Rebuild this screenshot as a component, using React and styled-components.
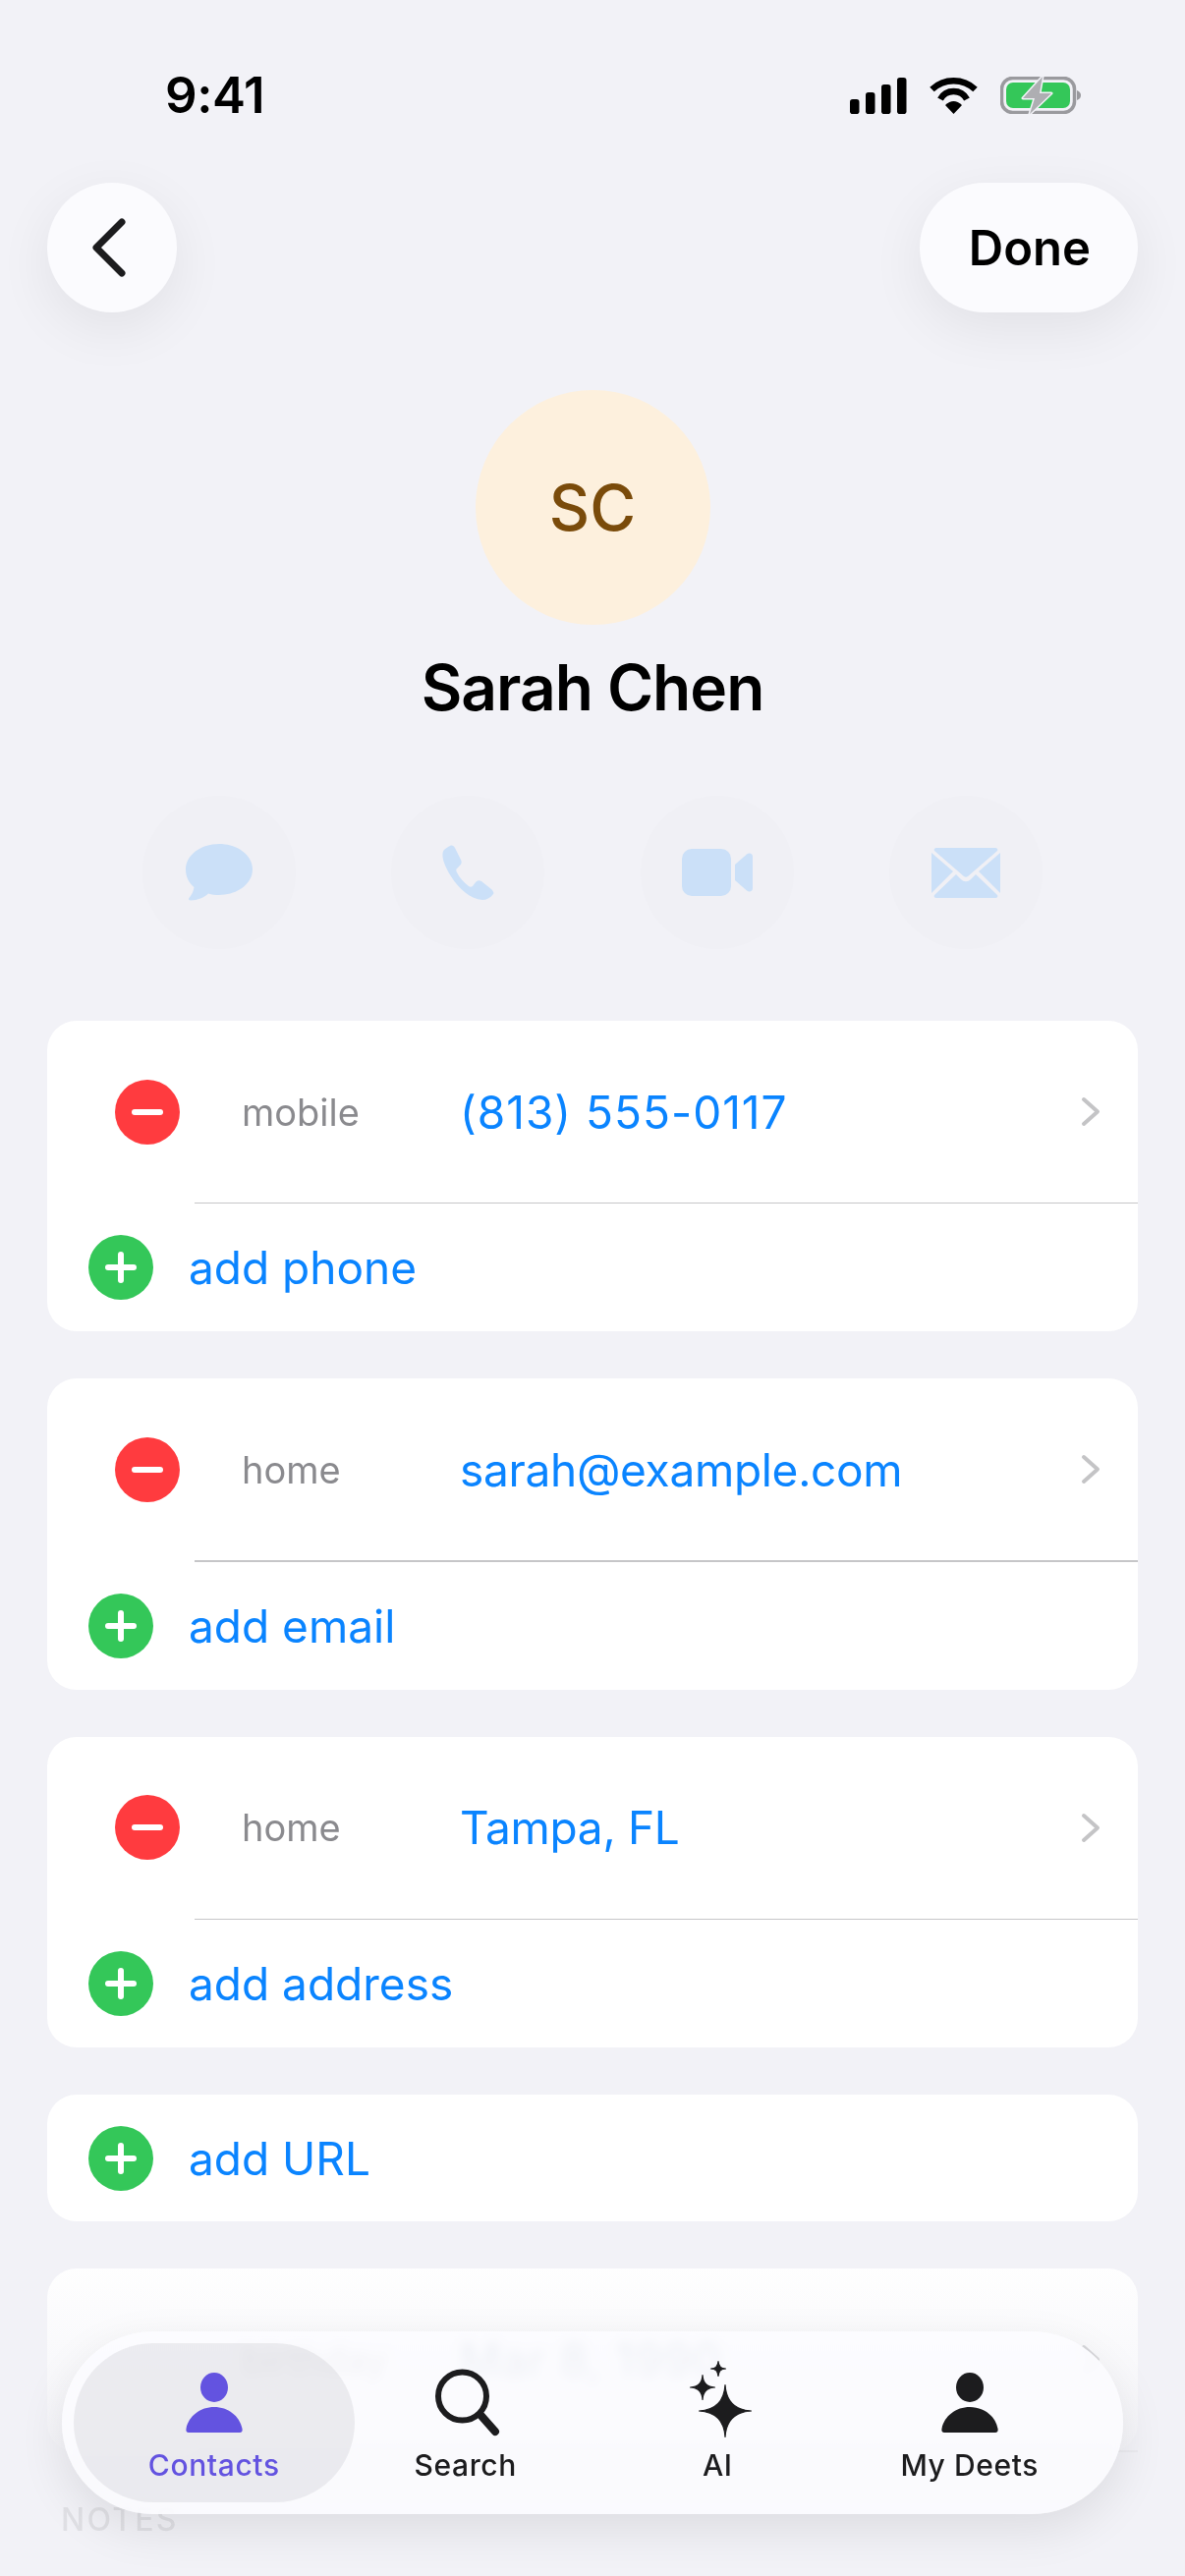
import React from 'react';
import styled, { createGlobalStyle } from 'styled-components';

const GlobalStyle = createGlobalStyle`
    html, body {
        margin: 0;
        padding: 0;
        background: #f2f2f7;
        font-family: Inter, 'Liberation Sans', sans-serif;
    }
`;

const Screen = styled.div`
    position: relative;
    width: 1206px;
    height: 2622px;
    overflow: hidden;
    background: #f2f2f7;
`;

const StatusBar = styled.div`
    display: flex;
    justify-content: space-between;
    align-items: center;
    height: 38px;
    padding: 78px 106px 70px 168px;
`;

const Clock = styled.span`
    font-size: 51px;
    line-height: 38px;
    font-weight: 600;
    color: #000;
    letter-spacing: -0.4px;
`;

const StatusIcons = styled.div`
    display: flex;
    align-items: center;
    gap: 22px;
    svg { display: block; }
`;

const TopBar = styled.div`
    display: flex;
    justify-content: space-between;
    padding: 0 48px;
`;

const RoundButton = styled.button`
    display: flex;
    align-items: center;
    justify-content: center;
    height: 132px;
    min-width: 132px;
    padding: ${p => (p.$wide ? '0 48px 0 50px' : '0')};
    border: none;
    border-radius: 66px;
    background: #fbfbfe;
    box-shadow: 0 16px 56px rgba(0, 0, 0, 0.07);
    font: 600 49px Inter, sans-serif;
    color: #000;
`;

const Profile = styled.section`
    display: flex;
    flex-direction: column;
    align-items: center;
    margin-top: 79px;
`;

const Avatar = styled.div`
    display: flex;
    align-items: center;
    justify-content: center;
    width: 239px;
    height: 239px;
    border-radius: 50%;
    background: #fdf0dd;
    color: #7a4b0a;
    font-size: 64px;
    font-weight: 500;
`;

const Name = styled.h1`
    margin: 24px 0 0;
    font-size: 64px;
    line-height: 80px;
    font-weight: 600;
    letter-spacing: -1px;
    color: #000;
`;

const Actions = styled.div`
    display: flex;
    justify-content: center;
    gap: 97.5px;
    margin-top: 70px;
`;

const ActionCircle = styled.div`
    display: flex;
    align-items: center;
    justify-content: center;
    width: 156px;
    height: 156px;
    border-radius: 50%;
    background: #f0f0f5;
    color: #cbe0f8;
`;

const CardList = styled.div`
    display: flex;
    flex-direction: column;
    gap: 48px;
    margin: 73px 48px 0;
`;

const Card = styled.section`
    border-radius: 30px;
    background: #fff;
`;

const FieldRow = styled.div`
    display: flex;
    align-items: center;
    height: 185px;
    padding: 0 38px 0 69px;
`;

const Divider = styled.div`
    height: 1.4px;
    margin-left: 150px;
    background: #c6c6c8;
`;

const RoundSign = styled.span`
    flex: none;
    position: relative;
    width: 66px;
    height: 66px;
    border-radius: 50%;
    background: ${p => p.$color};
    &::before, &::after {
        content: '';
        position: absolute;
        left: 17px;
        top: 30px;
        width: 32px;
        height: 6px;
        border-radius: 3px;
        background: #fff;
    }
    &::after {
        display: ${p => (p.$plus ? 'block' : 'none')};
        transform: rotate(90deg);
    }
`;

const FieldLabel = styled.span`
    flex: none;
    width: 222px;
    margin-left: ${p => (p.$plain ? '129px' : '63px')};
    font-size: 38px;
    color: #8a8a8e;
`;

const FieldValue = styled.span`
    flex: 1;
    font-size: 46px;
    letter-spacing: ${p => (p.$digits ? '1px' : '-0.3px')};
    color: #0a84ff;
`;

const AddRow = styled.div`
    display: flex;
    align-items: center;
    gap: 36px;
    height: ${p => p.$h}px;
    padding-left: 42px;
`;

const AddText = styled.span`
    font-size: 46px;
    color: #0a84ff;
`;

const SectionNote = styled.div`
    margin: 55px 0 0 62px;
    font-size: 32px;
    line-height: 28px;
    font-weight: 500;
    letter-spacing: 2.2px;
    color: #8a8a8e;
`;

const BottomFade = styled.div`
    position: absolute;
    left: 0;
    right: 0;
    bottom: 0;
    height: 332px;
    background: linear-gradient(to bottom, rgba(242, 242, 247, 0) 0%, rgba(242, 242, 247, 0.84) 60%, rgba(242, 242, 247, 0.82) 100%);
    pointer-events: none;
`;

const TabBar = styled.nav`
    position: absolute;
    left: 63px;
    top: 2373px;
    box-sizing: border-box;
    display: grid;
    grid-template-columns: repeat(4, 256.5px);
    width: 1080px;
    height: 186px;
    padding: 12px 0 12px 26px;
    border-radius: 93px;
    background: rgba(252, 252, 255, 0.84);
    backdrop-filter: blur(6px) saturate(0.2);
    box-shadow: 0 16px 48px rgba(0, 0, 0, 0.09);
`;

const Tab = styled.div`
    display: flex;
    flex-direction: column;
    align-items: center;
    padding-top: 27px;
    margin: ${p => (p.$active ? '0 -15px 0 -14px' : '0')};
    border-radius: 81px;
    background: ${p => (p.$active ? 'rgba(120, 120, 128, 0.12)' : 'transparent')};
    color: ${p => (p.$active ? '#6353e0' : '#1c1c1e')};
`;

const TabIcon = styled.svg`
    display: block;
    width: 70px;
    height: 70px;
    overflow: visible;
`;

const TabLabel = styled.span`
    margin-top: 9px;
    font-size: 30px;
    line-height: 36px;
    font-weight: 500;
    letter-spacing: 0.6px;
`;

function BackChevron() {
    return (
        <svg width="40" height="64" viewBox="0 0 40 64" fill="none" stroke="#1c1c1e" strokeWidth="7" strokeLinecap="round" strokeLinejoin="round">
            <path d="M30 6 L4 32 L30 58" />
        </svg>
    );
}

function RowChevron() {
    return (
        <svg width="20" height="31" viewBox="0 0 20 31" fill="none" stroke="#c4c4c6" strokeWidth="4" strokeLinecap="round" strokeLinejoin="round">
            <path d="M3 3 L17 15.5 L3 28" />
        </svg>
    );
}

function SignalIcon() {
    return (
        <svg width="58" height="38" viewBox="0 0 58 38" fill="#000">
            <rect x="0" y="23" width="9.5" height="15" rx="2.8" />
            <rect x="16" y="16" width="9.5" height="22" rx="2.8" />
            <rect x="32" y="8" width="9.5" height="30" rx="2.8" />
            <rect x="48" y="1" width="9.5" height="37" rx="2.8" />
        </svg>
    );
}

function WifiIcon() {
    return (
        <svg width="51" height="38" viewBox="0 0 51 38">
            <g fill="none" stroke="#000" strokeWidth="6.5">
                <path d="M3.5 13 A32 32 0 0 1 47.5 13" />
                <path d="M12 23 A15.4 15.4 0 0 1 39 23" />
            </g>
            <path d="M25.5 38 L17 29 Q25.5 21 34 29 Z" fill="#000" />
        </svg>
    );
}

function BatteryIcon() {
    return (
        <svg width="82" height="38" viewBox="0 0 82 38">
            <rect x="1.5" y="1.5" width="74" height="35" rx="11" fill="none" stroke="#9a9a9e" strokeWidth="3.5" />
            <path d="M78 14 C81 15 82 17 82 19 C82 21 81 23 78 24 Z" fill="#9a9a9e" />
            <rect x="6" y="6" width="65" height="26" rx="7" fill="#34c759" />
            <path d="M43 0 L23 22 L35 22 L30 38 L52 17 L40 17 Z" fill="#aeaeb2" stroke="#f2f2f7" strokeWidth="3" strokeLinejoin="round" paintOrder="stroke" />
        </svg>
    );
}

function MessageIcon() {
    return (
        <svg width="68" height="58" viewBox="0 0 68 58" fill="currentColor">
            <path d="M34 0 C53 0 68 11.5 68 26 C68 40.5 53 52 34 52 C30 52 26.5 51.5 23 50.5 C19 54.5 12 57.5 5 57.5 C3 57.5 2.5 56 3.5 55 C6 52 8 48 8.5 44 C3 39.5 0 33 0 26 C0 11.5 15 0 34 0 Z" />
        </svg>
    );
}

function PhoneIcon() {
    return (
        <svg width="54" height="56" viewBox="0 0 54 56" fill="currentColor">
            <path d="M9 1 C11 0 13 1 14 3 L20 15 C21 17 21 19 19 21 L16 24 C15 25 15 26 16 28 C19 34 23 38 28 42 C29 43 31 43 32 42 L35 38 C37 36 39 36 41 37 L51 45 C53 47 54 49 53 50 C50 54 46 56 42 56 C30 55 18 45 10 32 C3 21 -1 10 3 5 C5 3 7 2 9 1 Z" />
        </svg>
    );
}

function VideoIcon() {
    return (
        <svg width="72" height="48" viewBox="0 0 72 48" fill="currentColor">
            <rect x="0" y="0" width="50" height="48" rx="10" />
            <path d="M54 16 L66 5.5 C69 3.5 72 5 72 8 L72 40 C72 43 69 44.5 66 42.5 L54 32 Z" />
        </svg>
    );
}

function MailIcon() {
    return (
        <svg width="70" height="51" viewBox="0 0 70 51" fill="currentColor">
            <path d="M5 0 L65 0 C67 0 68 2 67 3 L37 29 C36 30 34 30 33 29 L3 3 C2 2 3 0 5 0 Z" />
            <path d="M0 5 L22 24 L0 46 Z" />
            <path d="M70 5 L48 24 L70 46 Z" />
            <path d="M25 27 L30 32 C33 35 37 35 40 32 L45 27 L67 48 C68 49 67 51 65 51 L5 51 C3 51 2 49 3 48 Z" />
        </svg>
    );
}

function PersonIcon() {
    return (
        <TabIcon viewBox="0 0 70 70" fill="currentColor">
            <ellipse cx="35" cy="18" rx="14" ry="15" />
            <path d="M9 64 C7 64 6 62.5 6.5 60 C9 47 21 38 35 38 C49 38 61 47 63.5 60 C64 62.5 63 64 61 64 Z" />
        </TabIcon>
    );
}

function SearchIcon() {
    return (
        <TabIcon viewBox="0 0 70 70" fill="none" stroke="currentColor">
            <circle cx="31.5" cy="27" r="24.5" strokeWidth="6" />
            <path d="M50 46 L65 63" strokeWidth="8" strokeLinecap="round" />
        </TabIcon>
    );
}

// four-point star with concave sides
const starPath = (x, y, r, k) => `M${x} ${y - r} Q${x + k} ${y - k} ${x + r} ${y} Q${x + k} ${y + k} ${x} ${y + r} Q${x - k} ${y + k} ${x - r} ${y} Q${x - k} ${y - k} ${x} ${y - r} Z`;

function SparkleIcon() {
    return (
        <TabIcon viewBox="0 0 70 70" fill="currentColor" stroke="currentColor" strokeWidth="1.2" strokeLinejoin="round">
            <path d={starPath(43, 42, 26.5, 1.5)} />
            <path d={starPath(20, 18, 12.5, 0.6)} />
            <path d={starPath(36, -1, 7.5, 0.3)} />
        </TabIcon>
    );
}

const cards = [
    { label: 'mobile', value: '(813) 555-0117', add: 'add phone', digits: true },
    { label: 'home', value: 'sarah@example.com', add: 'add email' },
    { label: 'home', value: 'Tampa, FL', add: 'add address' },
];

const tabs = [
    { label: 'Contacts', Icon: PersonIcon, active: true },
    { label: 'Search', Icon: SearchIcon },
    { label: 'AI', Icon: SparkleIcon },
    { label: 'My Deets', Icon: PersonIcon },
];

function Field({ label, value, plain, digits }) {
    return (
        <>
            <FieldRow>
                {!plain && <RoundSign $color="#ff3b3f" />}
                <FieldLabel $plain={plain}>{label}</FieldLabel>
                <FieldValue $digits={digits}>{value}</FieldValue>
                <RowChevron />
            </FieldRow>
            <Divider />
        </>
    );
}

function AddField({ text, h }) {
    return (
        <AddRow $h={h}>
            <RoundSign $color="#34c759" $plus />
            <AddText>{text}</AddText>
        </AddRow>
    );
}

export default function App() {
    return (
        <Screen>
            <GlobalStyle />
            <StatusBar>
                <Clock>9:41</Clock>
                <StatusIcons>
                    <SignalIcon />
                    <WifiIcon />
                    <BatteryIcon />
                </StatusIcons>
            </StatusBar>
            <TopBar>
                <RoundButton><BackChevron /></RoundButton>
                <RoundButton $wide>Done</RoundButton>
            </TopBar>
            <Profile>
                <Avatar>SC</Avatar>
                <Name>Sarah Chen</Name>
            </Profile>
            <Actions>
                <ActionCircle><MessageIcon /></ActionCircle>
                <ActionCircle><PhoneIcon /></ActionCircle>
                <ActionCircle><VideoIcon /></ActionCircle>
                <ActionCircle><MailIcon /></ActionCircle>
            </Actions>
            <CardList>
                {cards.map(c => (
                    <Card key={c.add}>
                        <Field label={c.label} value={c.value} digits={c.digits} />
                        <AddField text={c.add} h={130} />
                    </Card>
                ))}
                <Card>
                    <AddField text="add URL" h={129} />
                </Card>
                <Card>
                    <Field label="birthday" value="Mar 8, 1990" plain digits />
                </Card>
            </CardList>
            <SectionNote>NOTES</SectionNote>
            <BottomFade />
            <TabBar>
                {tabs.map(({ label, Icon, active }) => (
                    <Tab key={label} $active={active}>
                        <Icon />
                        <TabLabel>{label}</TabLabel>
                    </Tab>
                ))}
            </TabBar>
        </Screen>
    );
}
